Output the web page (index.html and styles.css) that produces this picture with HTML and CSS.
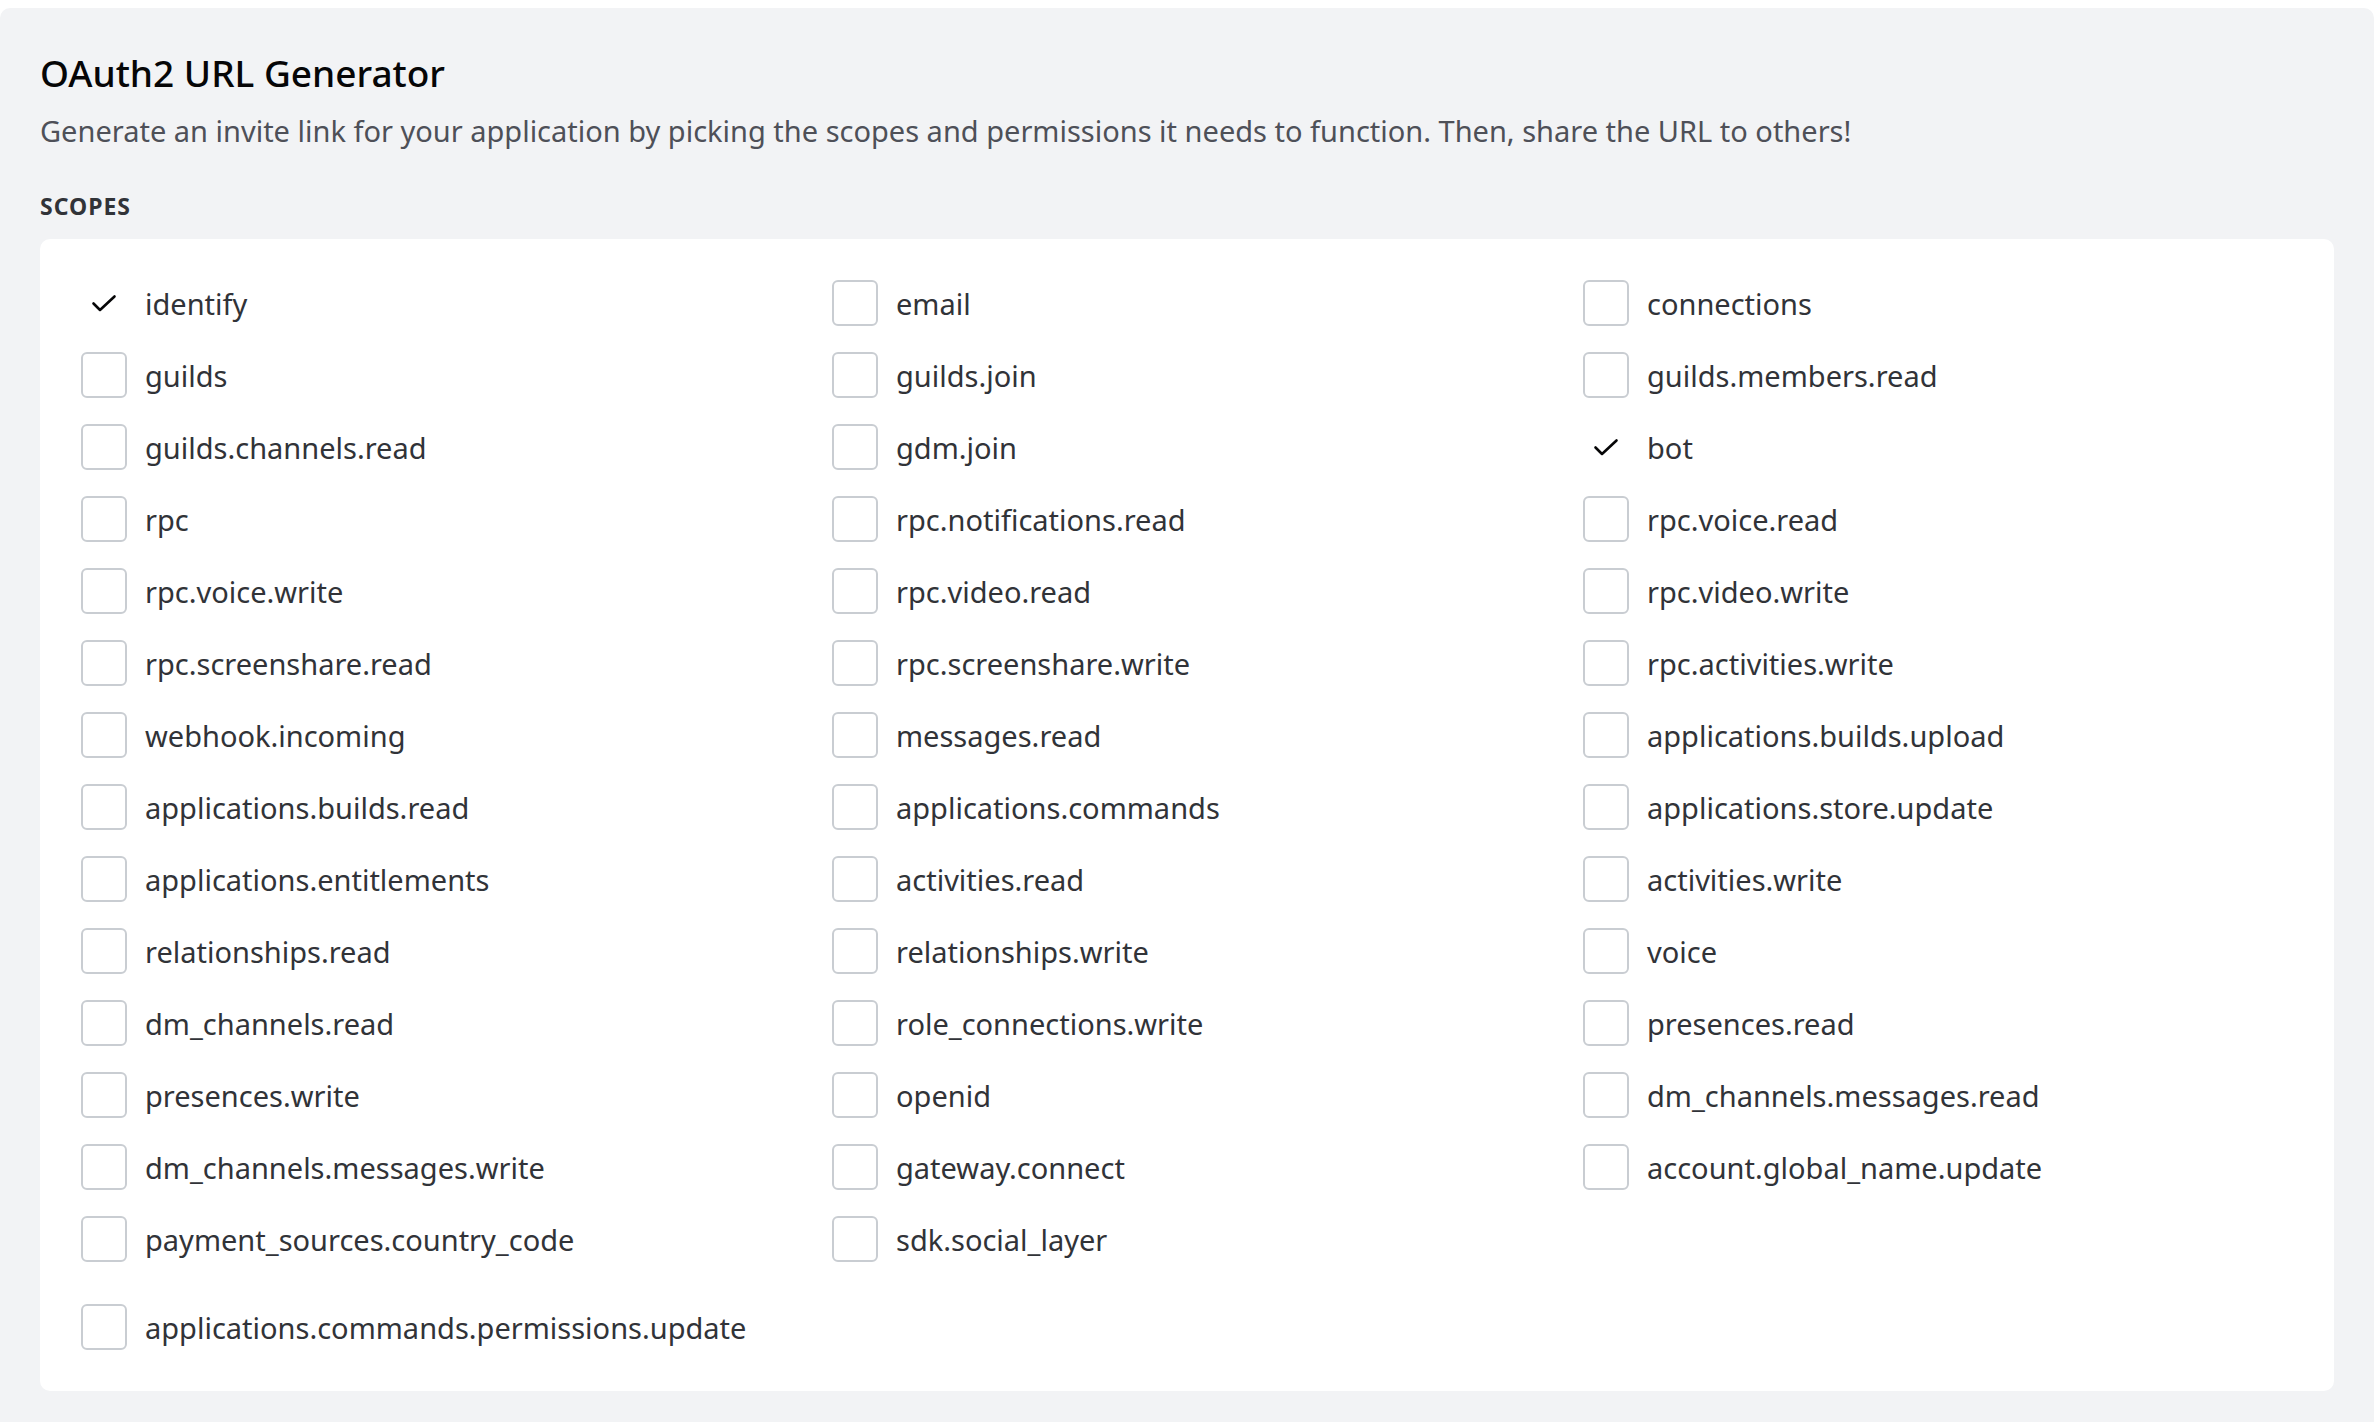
FILE: index.html
```html
<!DOCTYPE html>
<html lang="en">
<head>
<meta charset="utf-8">
<title>OAuth2 URL Generator</title>
<link rel="stylesheet" href="styles.css">
</head>
<body>
<section class="panel">
  <h1 class="title">OAuth2 URL Generator</h1>
  <p class="desc">Generate an invite link for your application by picking the scopes and permissions it needs to function. Then, share the URL to others!</p>
  <h2 class="label">Scopes</h2>
  <div class="card">
    <div class="grid">
      <label class="item checked"><span class="box"><svg viewBox="0 0 46 46" width="46" height="46"><path d="M12.5 23.5 L19 30 L33.5 16.5" fill="none" stroke="#060607" stroke-width="2.6" stroke-linecap="round" stroke-linejoin="round"/></svg></span><span class="name">identify</span></label>
      <label class="item"><span class="box"></span><span class="name">email</span></label>
      <label class="item"><span class="box"></span><span class="name">connections</span></label>

      <label class="item"><span class="box"></span><span class="name">guilds</span></label>
      <label class="item"><span class="box"></span><span class="name">guilds.join</span></label>
      <label class="item"><span class="box"></span><span class="name">guilds.members.read</span></label>

      <label class="item"><span class="box"></span><span class="name">guilds.channels.read</span></label>
      <label class="item"><span class="box"></span><span class="name">gdm.join</span></label>
      <label class="item checked"><span class="box"><svg viewBox="0 0 46 46" width="46" height="46"><path d="M12.5 23.5 L19 30 L33.5 16.5" fill="none" stroke="#060607" stroke-width="2.6" stroke-linecap="round" stroke-linejoin="round"/></svg></span><span class="name">bot</span></label>

      <label class="item"><span class="box"></span><span class="name">rpc</span></label>
      <label class="item"><span class="box"></span><span class="name">rpc.notifications.read</span></label>
      <label class="item"><span class="box"></span><span class="name">rpc.voice.read</span></label>

      <label class="item"><span class="box"></span><span class="name">rpc.voice.write</span></label>
      <label class="item"><span class="box"></span><span class="name">rpc.video.read</span></label>
      <label class="item"><span class="box"></span><span class="name">rpc.video.write</span></label>

      <label class="item"><span class="box"></span><span class="name">rpc.screenshare.read</span></label>
      <label class="item"><span class="box"></span><span class="name">rpc.screenshare.write</span></label>
      <label class="item"><span class="box"></span><span class="name">rpc.activities.write</span></label>

      <label class="item"><span class="box"></span><span class="name">webhook.incoming</span></label>
      <label class="item"><span class="box"></span><span class="name">messages.read</span></label>
      <label class="item"><span class="box"></span><span class="name">applications.builds.upload</span></label>

      <label class="item"><span class="box"></span><span class="name">applications.builds.read</span></label>
      <label class="item"><span class="box"></span><span class="name">applications.commands</span></label>
      <label class="item"><span class="box"></span><span class="name">applications.store.update</span></label>

      <label class="item"><span class="box"></span><span class="name">applications.entitlements</span></label>
      <label class="item"><span class="box"></span><span class="name">activities.read</span></label>
      <label class="item"><span class="box"></span><span class="name">activities.write</span></label>

      <label class="item"><span class="box"></span><span class="name">relationships.read</span></label>
      <label class="item"><span class="box"></span><span class="name">relationships.write</span></label>
      <label class="item"><span class="box"></span><span class="name">voice</span></label>

      <label class="item"><span class="box"></span><span class="name">dm_channels.read</span></label>
      <label class="item"><span class="box"></span><span class="name">role_connections.write</span></label>
      <label class="item"><span class="box"></span><span class="name">presences.read</span></label>

      <label class="item"><span class="box"></span><span class="name">presences.write</span></label>
      <label class="item"><span class="box"></span><span class="name">openid</span></label>
      <label class="item"><span class="box"></span><span class="name">dm_channels.messages.read</span></label>

      <label class="item"><span class="box"></span><span class="name">dm_channels.messages.write</span></label>
      <label class="item"><span class="box"></span><span class="name">gateway.connect</span></label>
      <label class="item"><span class="box"></span><span class="name">account.global_name.update</span></label>

      <label class="item"><span class="box"></span><span class="name">payment_sources.country_code</span></label>
      <label class="item"><span class="box"></span><span class="name">sdk.social_layer</span></label>
    </div>
    <div class="extra">
      <label class="item"><span class="box"></span><span class="name">applications.commands.permissions.update</span></label>
    </div>
  </div>
</section>
</body>
</html>
```

FILE: styles.css
```css
* { box-sizing: border-box; }

html, body {
  margin: 0;
  padding: 0;
  background: #ffffff;
}

body {
  font-family: "Noto Sans", "Open Sans", "Liberation Sans", sans-serif;
  color: #313338;
  padding-top: 8px;
  padding-right: 4px;
}

.panel {
  background: #f2f3f5;
  border-radius: 10px 10px 0 0;
  padding: 40px 40px 40px 40px;
  min-height: 1414px;
}

.title {
  margin: 0;
  font-size: 37px;
  line-height: 50px;
  font-weight: 500;
  color: #060607;
}

.desc {
  margin: 15px 0 0 0;
  font-size: 29px;
  line-height: 36px;
  font-weight: 400;
  color: #4e5058;
}

.label {
  margin: 43px 0 0 0;
  font-size: 23px;
  line-height: 28px;
  font-weight: 700;
  letter-spacing: 1px;
  text-transform: uppercase;
  color: #313338;
}

.card {
  margin-top: 19px;
  background: #ffffff;
  border-radius: 10px;
  padding: 41px 40px 41px 41px;
}

.grid {
  display: grid;
  grid-template-columns: repeat(3, 1fr);
  column-gap: 40px;
  row-gap: 26px;
}

.extra {
  margin-top: 42px;
}

.item {
  display: flex;
  align-items: center;
  gap: 18px;
  height: 46px;
  font-size: 29px;
  color: #313338;
}

.box {
  flex: 0 0 46px;
  width: 46px;
  height: 46px;
  border: 2px solid #c9cdd2;
  border-radius: 6px;
  position: relative;
}

.item.checked .box {
  border-color: transparent;
}

.box svg {
  position: absolute;
  left: -2px;
  top: -2px;
}

.name {
  white-space: nowrap;
}
```
